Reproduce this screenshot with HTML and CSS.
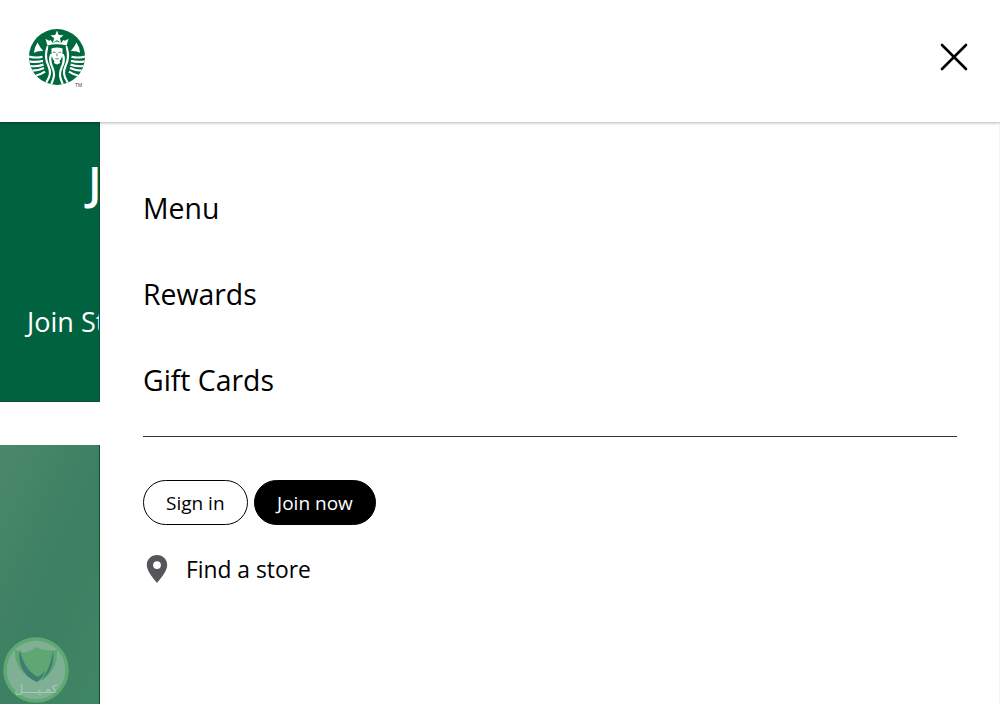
FILE: index.html
```html
<!DOCTYPE html>
<html lang="en">
<head>
<meta charset="utf-8">
<title>Starbucks</title>
<link rel="stylesheet" href="styles.css">
</head>
<body>
<header class="topbar">
  <svg class="logo" viewBox="0 0 60 60" width="60" height="60" aria-label="Starbucks">
    <defs>
      <clipPath id="logo-disc"><circle cx="28" cy="28" r="28"/></clipPath>
      <g id="logo-side">
        <path d="M8.500 13.500l2.800 4.700 2.900 3.800-5 .3-4.300 1.500 1-5z" fill="#fff"/>
        <g fill="none" stroke="#fff" stroke-width="2.200">
          <path d="M0 27.500c5 1.300 9 1.500 13.500.2"/>
          <path d="M0 32.300c5 1 9 1 14-.4"/>
          <path d="M1 37c5 .6 9 .2 13.500-1.400"/>
          <path d="M3 41.700c4.500 .1 7.500-.7 12-2.700"/>
          <path d="M7 46.500c3.500-.4 6-1.800 9-3.800"/>
        </g>
        <g fill="none" stroke="#fff" stroke-width="2.200" stroke-linecap="round">
          <path d="M18.500 18c-2 6-2 10-.7 14.500 1.300 4.300 3.700 7.500 3.200 12-.3 3-1.500 5.500-3.400 8.500"/>
          <path d="M22 26c-1.300 3-1 6 0 9 1.300 3.800 3.500 6.800 3 11.500-.3 3-1.300 5-2.500 8"/>
        </g>
      </g>
    </defs>
    <circle cx="28" cy="28" r="28" fill="#00693e"/>
    <g clip-path="url(#logo-disc)">
      <use href="#logo-side"/>
      <use href="#logo-side" transform="matrix(-1 0 0 1 56 0)"/>
    </g>
    <path d="M28 1.600l1.800 4.300 4.700.3-3.600 3 1.200 4.600-4.100-2.500-4.100 2.500 1.200-4.600-3.600-3 4.700-.3z" fill="#fff"/>
    <path d="M16.500 9.800l3.500 1.900 1.800-.8 1.800 2.800 4.400-1.300 4.400 1.300 1.800-2.800 1.800.8 3.500-1.900-1.900 6.700c-6-1.700-13.200-1.700-19.200 0z" fill="#fff"/>
    <path d="M19.500 17.500c5.500-1.400 11.500-1.400 17 0l.5 3c-5-1.500-13-1.500-18 0z" fill="#00693e"/>
    <path d="M22.500 19.500c3.500-1.200 7.500-1.200 11 0 .4 6.500-.8 10.500-3 12.800l.8 1.700-3.300 1.500-3.300-1.500.8-1.700c-2.200-2.300-3.400-6.300-3-12.800z" fill="#fff"/>
    <g fill="none" stroke="#00693e" stroke-width=".8">
      <path d="M23.800 23.600c1-.5 2-.5 2.700 0M29.500 23.600c.7-.5 1.700-.5 2.700 0"/>
      <path d="M28 24.500v2.800M26.400 29.400c1 .6 2.200.6 3.200 0"/>
    </g>
    <text x="46" y="58" class="logo-tm">TM</text>
  </svg>
  <button class="close" aria-label="Close menu">
    <svg viewBox="0 0 28 28" width="28" height="28"><path d="M2 2l24 24M26 2L2 26" stroke="#000" stroke-width="2.600" fill="none" stroke-linecap="round"/></svg>
  </button>
</header>

<main class="page">
  <section class="hero">
    <h1 class="hero-title">Join</h1>
    <p class="hero-text">Join Starbucks Rewards</p>
  </section>
  <div class="band"></div>
  <section class="promo">
    <svg class="watermark" viewBox="0 0 68 68" width="68" height="68">
      <circle cx="34" cy="34" r="31" fill="#7fb096" stroke="#5ea872" stroke-width="3.500"/>
      <path d="M13 14c4 .5 6 1.500 8 3 5-1 10-3.500 14-6 5 3 10 4 20 3 1 13-4 26-20 32C20 40 12 27 13 14z" fill="#5fa772"/>
      <path d="M18 14c2 12 9 23 18 27 3-2 5-4 7-6-1 4-4 8-8 11C22 40 15 28 18 14z" fill="#3e7d70"/>
      <path d="M51 15c2 12-3 23-12 30 3-4 5-8 7-12 2-5 4-12 5-18z" fill="#3e7d70"/>
      <text x="34" y="57" class="watermark-text">كمـيــــل</text>
    </svg>
  </section>
</main>

<aside class="drawer">
  <nav class="main-links">
    <a class="main-link" href="#">Menu</a>
    <a class="main-link" href="#">Rewards</a>
    <a class="main-link" href="#">Gift Cards</a>
  </nav>
  <hr class="rule">
  <div class="actions">
    <a class="pill pill-outline" href="#">Sign in</a>
    <a class="pill pill-solid" href="#">Join now</a>
  </div>
  <a class="store" href="#">
    <svg viewBox="0 0 24 30" width="24" height="30"><path fill-rule="evenodd" d="M12 1C6 1 1.800 5.500 1.800 11c0 6.500 7.200 14 10.200 18 3-4 10.200-11.500 10.200-18C22.200 5.500 18 1 12 1zm0 6.200a3.900 3.900 0 1 1 0 7.800 3.900 3.900 0 0 1 0-7.800z" fill="#55565a"/></svg>
    <span class="store-label">Find a store</span>
  </a>
</aside>
</body>
</html>
```

FILE: styles.css
```css
* { box-sizing: border-box; }

html, body {
  margin: 0;
  height: 704px;
  overflow: hidden;
  background: #fff;
  font-family: "Open Sans", "Noto Sans", sans-serif;
  color: #000;
}

.topbar {
  position: relative;
  z-index: 2;
  height: 122px;
  display: flex;
  align-items: flex-start;
  justify-content: space-between;
  padding: 29px 32px 0 29px;
  background: #fff;
  box-shadow: 0 1px 3px rgba(0,0,0,.3);
}

.logo { display: block; }
.logo-tm { font: 5px "Liberation Sans", sans-serif; fill: #444; }

.close {
  margin-top: 14px;
  width: 28px;
  height: 28px;
  padding: 0;
  border: 0;
  background: none;
}
.close svg { display: block; }

.page { width: 100px; height: 582px; display: flex; flex-direction: column; }

.hero {
  height: 280px;
  background: #00623f;
  border-right: 1px solid #0b4f36;
  border-bottom: 1px solid #0b4f36;
  color: #fff;
  white-space: nowrap;
  overflow: hidden;
  padding: 30px 0 0 27px;
}
.hero-title {
  margin: 0 0 0 61px;
  font-size: 45px;
  line-height: 60px;
  font-weight: 600;
}
.hero-text {
  margin: 92px 0 0;
  font-size: 27px;
  line-height: 36px;
}

.band { height: 43px; background: #fff; }

.promo {
  flex: 1;
  position: relative;
  background: linear-gradient(115deg, #4a886b 0%, #3c7f62 55%, #3f8666 100%);
  border-right: 1px solid #0b4f36;
}

.watermark { position: absolute; left: 2px; top: 191px; }
.watermark-text { font: 12px "DejaVu Sans", sans-serif; fill: #a9ccb6; text-anchor: middle; }

.drawer {
  position: absolute;
  top: 122px;
  left: 100px;
  right: 0;
  bottom: 0;
  background: #fff;
  padding: 64px 43px 0;
  box-shadow: inset -1px 0 #f4f4f4;
}

.main-links { display: flex; flex-direction: column; gap: 41px; }

.main-link {
  font-size: 28.400px;
  line-height: 45px;
  color: #000;
  text-decoration: none;
}

.rule { margin: 33px 0 43px; border: 0; border-top: 1px solid #333; }

.actions { display: flex; gap: 6px; }

.pill {
  height: 45px;
  border-radius: 23px;
  display: flex;
  align-items: center;
  padding: 0 22px;
  font-size: 19px;
  text-decoration: none;
  border: 1px solid #000;
}
.pill-outline { color: #000; background: #fff; }
.pill-solid { color: #fff; background: #000; padding: 0 22.500px; }

.store {
  display: flex;
  align-items: center;
  gap: 17px;
  margin-top: 14px;
  margin-left: 2px;
  font-size: 22.800px;
  line-height: 60px;
  height: 60px;
  color: #000;
  text-decoration: none;
}
.store svg { display: block; flex: none; }
.store-label { padding-top: 1px; }
```
